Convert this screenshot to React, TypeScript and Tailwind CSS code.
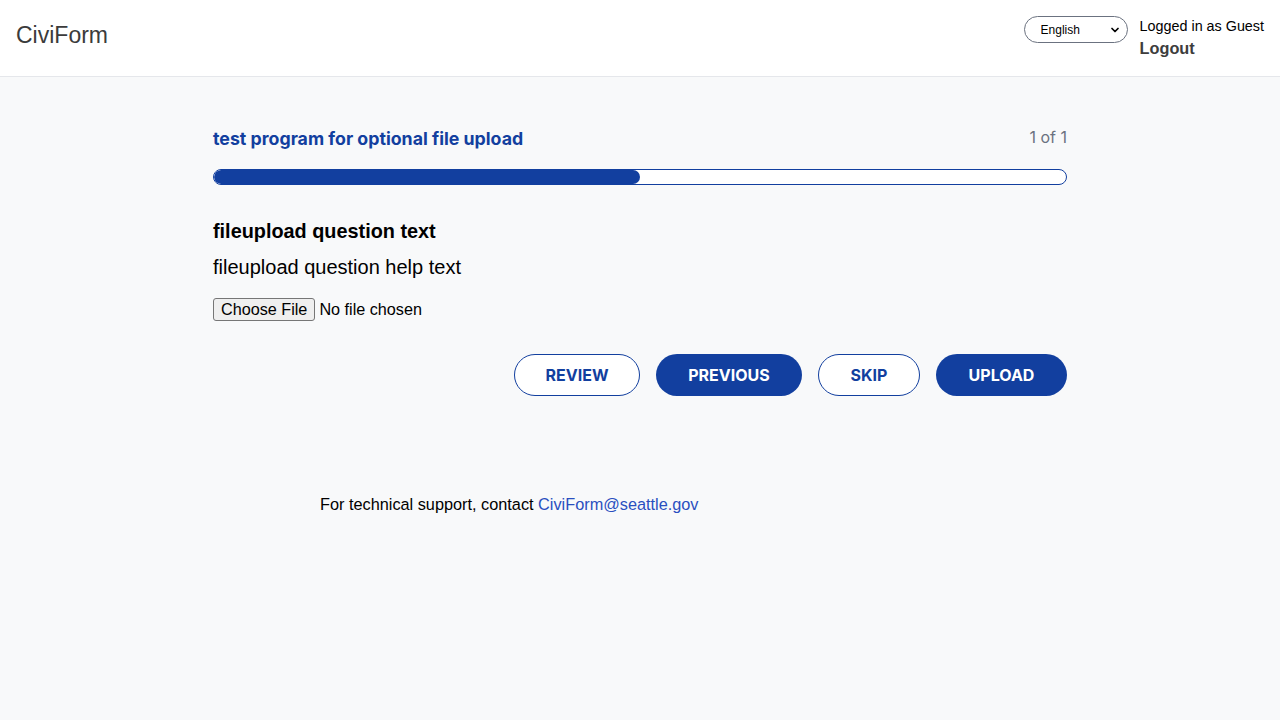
import { ChevronDown } from "lucide-react";

const BUTTONS = [
  { label: "REVIEW", primary: false, w: "w-[126px]" },
  { label: "PREVIOUS", primary: true, w: "w-[146px]" },
  { label: "SKIP", primary: false, w: "w-[102px]" },
  { label: "UPLOAD", primary: true, w: "w-[131px]" },
];

export default function App() {
  return (
    <div className="min-h-[720px] bg-[#f8f9fa] font-['Liberation_Sans',Arial,sans-serif] text-black">
      {/* Header */}
      <header className="h-[77px] bg-white border-b border-[#e5e7eb] flex items-start justify-between">
        <div className="pl-4 pt-[18px] text-[23px] text-[#3b3b3b]">CiviForm</div>
        <div className="flex items-start pt-4 pr-4 gap-3">
          <div className="relative w-[104px] h-[27px] rounded-full border border-[#6b7280] bg-white">
            <select className="appearance-none w-full h-full bg-transparent rounded-full pl-4 text-[12px] text-black outline-none">
              <option>English</option>
            </select>
            <ChevronDown className="absolute right-[6px] top-[7px] w-[12px] h-[12px] pointer-events-none" strokeWidth={3.5} />
          </div>
          <div className="pt-[1px]">
            <div className="text-[14.35px] leading-[18px]">Logged in as Guest</div>
            <div className="text-[16.3px] font-bold leading-[26px] text-[#3d3d3d]">Logout</div>
          </div>
        </div>
      </header>

      {/* Main */}
      <main className="w-[854px] mx-auto pt-[49px]">
        <div className="flex items-center justify-between h-[24px]">
          <h1 className="pt-[2px] font-['Inter',sans-serif] font-bold text-[17.75px] text-[#123f9f]">
            test program for optional file upload
          </h1>
          <span className="font-['Inter',sans-serif] text-[16px] text-[#6b7280] -mt-[2px]">1 of 1</span>
        </div>

        <div className="mt-[19px] h-[16px] rounded-full border border-[#123f9f] bg-white overflow-hidden">
          <div className="h-full w-1/2 rounded-full bg-[#123f9f]" />
        </div>

        <div className="mt-[34px] font-bold text-[19.85px] leading-[24px]">fileupload question text</div>
        <div className="mt-[12px] text-[20px] leading-[24px]">fileupload question help text</div>

        <div className="mt-[18px] flex items-center text-[16.2px]">
          <button className="h-[23px] px-[7px] border border-[#767676] rounded-[3px] bg-[#efefef] text-[16.2px] leading-none">
            Choose File
          </button>
          <span className="ml-[4px]">No file chosen</span>
        </div>

        <div className="mt-[33px] flex justify-end gap-4">
          {BUTTONS.map((b) => (
            <button
              key={b.label}
              className={`${b.w} h-[42px] rounded-full font-['Inter',sans-serif] font-bold text-[16px] ${
                b.primary
                  ? "bg-[#123f9f] text-white"
                  : "bg-white border border-[#123f9f] text-[#123f9f]"
              }`}
            >
              {b.label}
            </button>
          ))}
        </div>
      </main>

      {/* Footer */}
      <footer className="pt-[96px] pl-[320px] text-[16.3px]">
        For technical support, contact{" "}
        <a href="#" className="text-[#2a4fc0]">
          CiviForm@seattle.gov
        </a>
      </footer>
    </div>
  );
}
